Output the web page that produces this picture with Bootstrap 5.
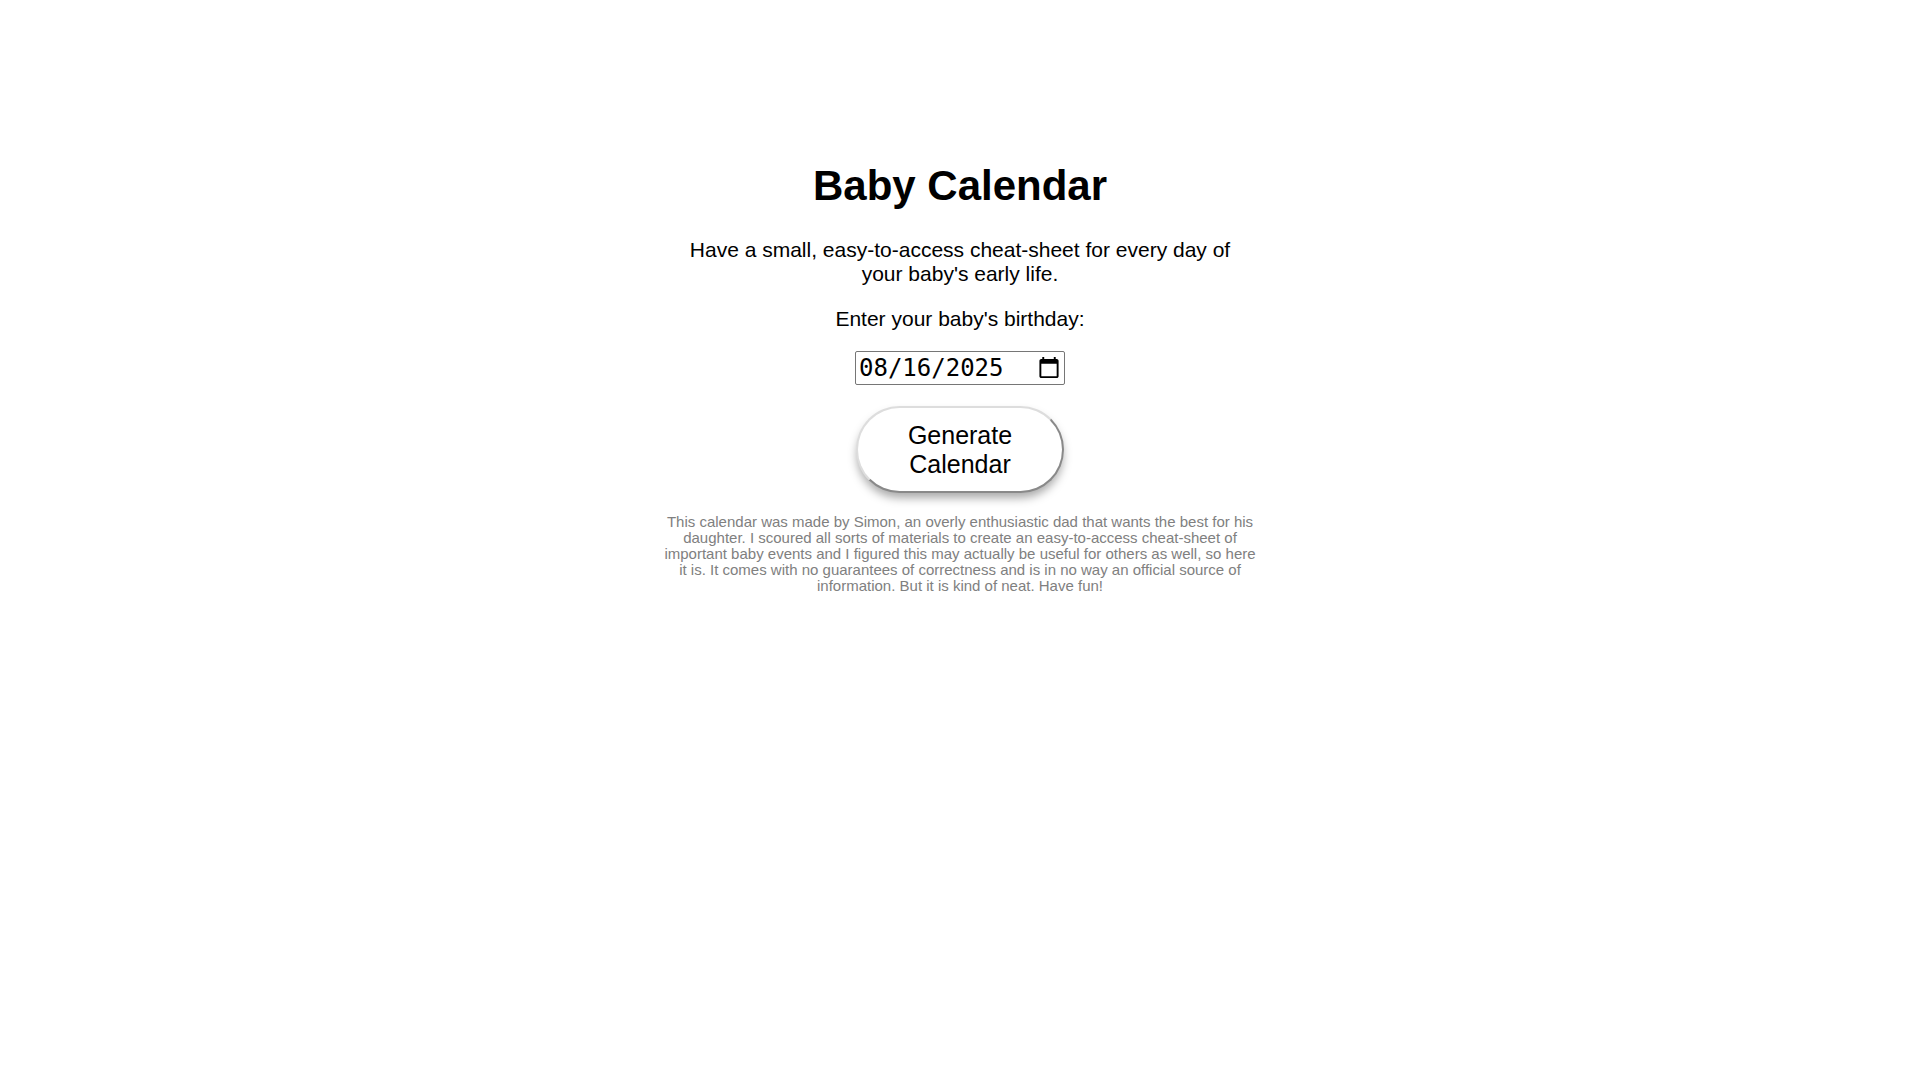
<!DOCTYPE html>
<html lang="en">
<head>
<meta charset="utf-8">
<meta name="viewport" content="width=device-width, initial-scale=1">
<title>Baby Calendar</title>
<link rel="stylesheet" href="https://cdn.jsdelivr.net/npm/bootstrap@5.3.0/dist/css/bootstrap.min.css">
<style>
  body { font-family: "Liberation Sans", Arial, sans-serif; font-size: 21px; line-height: 24px; color: #000; background: #fff; }
  .page-main { width: 31%; min-width: 320px; padding-top: 162px; }
  .page-title { font-size: 42px; line-height: 48px; margin-bottom: 28px; }
  .page-text { margin-bottom: 21px; }
  .birthday-label { margin-bottom: 20px; }
  .birthday-input { font-family: "DejaVu Sans Mono", monospace; font-size: 24px; line-height: normal; width: 210px; height: 34px; color: #000; background: #fff; border: 1px solid #767676; border-radius: 2px; padding: 1px 1px 1px 3px; }
  .generate-btn { width: 208px; margin: 21px 0; padding: 13px 30px 12px; font-size: 25px; line-height: 29px; color: #000; background: #fff; border: 2px outset #ddd; border-radius: 50px; box-shadow: 0 6px 10px -1px rgba(0, 0, 0, .34); }
  .page-note { font-size: 15px; line-height: 16px; color: gray; }
</style>
</head>
<body>
<main class="page-main mx-auto text-center">
  <h1 class="page-title fw-bold">Baby Calendar</h1>
  <p class="page-text px-3">Have a small, easy-to-access cheat-sheet for every day of your baby's early life.</p>
  <form class="d-flex flex-column align-items-center">
    <label class="birthday-label" for="birthday">Enter your baby's birthday:</label>
    <input class="birthday-input" type="date" id="birthday" name="birthday" value="2025-08-16">
    <button class="generate-btn" type="button">Generate Calendar</button>
  </form>
  <p class="page-note mb-0">This calendar was made by Simon, an overly enthusiastic dad that wants the best for his daughter. I scoured all sorts of materials to create an easy-to-access cheat-sheet of important baby events and I figured this may actually be useful for others as well, so here it is. It comes with no guarantees of correctness and is in no way an official source of information. But it is kind of neat. Have fun!</p>
</main>
<script src="https://cdn.jsdelivr.net/npm/bootstrap@5.3.0/dist/js/bootstrap.bundle.min.js"></script>
</body>
</html>
